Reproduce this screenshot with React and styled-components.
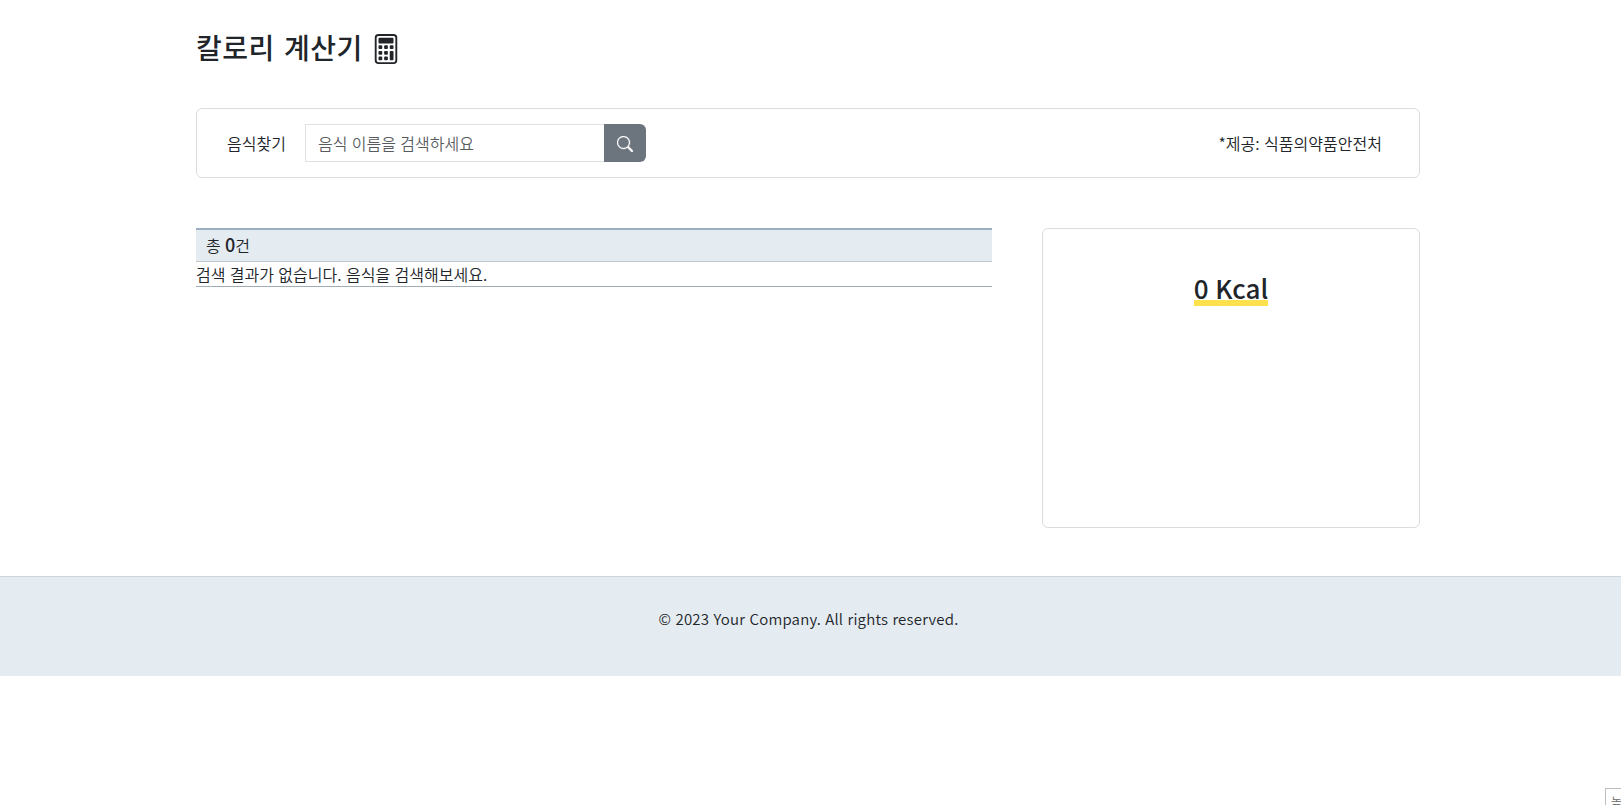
import React from 'react';
import styled, { createGlobalStyle } from 'styled-components';
import { BsCalculator, BsSearch } from 'react-icons/bs';

const GlobalStyle = createGlobalStyle`
  *, *::before, *::after { box-sizing: border-box; }
  html { overflow: hidden; }
  body {
    margin: 0;
    background: #fff;
    color: #212529;
    font-family: "Noto Sans CJK KR", "Noto Sans", sans-serif;
    font-size: 16px;
    font-weight: 350;
    line-height: 24px;
    letter-spacing: 0.03px;
    word-spacing: 0.7px;
  }
`;

const Page = styled.div`
  height: 805px;
  overflow: hidden;
`;

const Container = styled.main`
  width: 1224px;
  margin: 0 0 0 196px;
  padding-top: 31px;
`;

const Title = styled.h1`
  display: flex;
  align-items: center;
  gap: 8px;
  height: 34px;
  margin: 0 0 43px;
  font-size: 28px;
  font-weight: 500;
  line-height: 32px;
  letter-spacing: 0.5px;
  word-spacing: 2.5px;
  svg { margin-top: 1px; }
`;

const TitleText = styled.span`
  height: 34px;
`;

const SearchPanel = styled.section`
  display: flex;
  align-items: center;
  height: 70px;
  padding: 0 37px 0 30px;
  border: 1px solid #dcdcdc;
  border-radius: 6px;
`;

const Label = styled.label`
  width: 78px;
`;

const SearchInput = styled.input`
  width: 299px;
  height: 38px;
  padding: 6px 12px;
  border: 1px solid #dee2e6;
  border-right: 0;
  border-radius: 0;
  outline: 0;
  font: inherit;
  letter-spacing: inherit;
  word-spacing: inherit;
  &::placeholder { color: rgba(33, 37, 41, 0.75); opacity: 1; }
`;

const SearchButton = styled.button`
  display: flex;
  align-items: center;
  justify-content: center;
  width: 42px;
  height: 38px;
  padding: 1px 0 0;
  border: 0;
  border-radius: 0 6px 6px 0;
  background: #6c757d;
  color: #fff;
  svg { stroke: currentColor; stroke-width: 0.35px; }
`;

const Source = styled.span`
  margin-left: auto;
`;

const Columns = styled.div`
  display: flex;
  align-items: flex-start;
  justify-content: space-between;
  margin-top: 50px;
`;

const Results = styled.section`
  width: 796px;
`;

const ResultCount = styled.div`
  height: 34px;
  padding: 2px 10px 0;
  border-top: 2px solid #9cb0c1;
  border-bottom: 1px solid #c6c9cc;
  background: #e4ebf1;
  b { font-size: 18px; font-weight: 500; }
`;

const EmptyMessage = styled.div`
  height: 25px;
  border-bottom: 1px solid #a0acb6;
`;

const Summary = styled.aside`
  display: flex;
  justify-content: center;
  align-items: flex-start;
  width: 378px;
  height: 300px;
  padding-top: 43px;
  border: 1px solid #dcdcdc;
  border-radius: 6px;
`;

const Total = styled.strong`
  height: 34px;
  border-bottom: 6px solid #ffe14d;
  font-size: 26px;
  font-weight: 500;
  line-height: 32px;
`;

const Footer = styled.footer`
  height: 100px;
  margin-top: 48px;
  padding: 30px 4px 0 0;
  border-top: 1px solid #ccd7e0;
  background: #e4ebf1;
  text-align: center;
  font-size: 15px;
  letter-spacing: 0.2px;
  word-spacing: 0.7px;
`;

const CornerTip = styled.div`
  position: absolute;
  top: 788px;
  left: 1605px;
  width: 16px;
  height: 17px;
  overflow: hidden;
  padding-left: 5px;
  border: solid #bdbdbd;
  border-width: 1px 0 0 1px;
  color: #666;
  font-size: 12px;
  line-height: 25px;
  white-space: nowrap;
`;

export default function App() {
  return (
    <Page>
      <GlobalStyle />
      <Container>
        <Title><TitleText>칼로리 계산기</TitleText> <BsCalculator size={30} /></Title>
        <SearchPanel>
          <Label htmlFor="food">음식찾기</Label>
          <SearchInput id="food" placeholder="음식 이름을 검색하세요" />
          <SearchButton aria-label="검색"><BsSearch size={16} /></SearchButton>
          <Source>*제공: 식품의약품안전처</Source>
        </SearchPanel>
        <Columns>
          <Results>
            <ResultCount>총 <b>0</b>건</ResultCount>
            <EmptyMessage>검색 결과가 없습니다. 음식을 검색해보세요.</EmptyMessage>
          </Results>
          <Summary><Total>0 Kcal</Total></Summary>
        </Columns>
      </Container>
      <Footer>© 2023 Your Company. All rights reserved.</Footer>
      <CornerTip>높</CornerTip>
    </Page>
  );
}
